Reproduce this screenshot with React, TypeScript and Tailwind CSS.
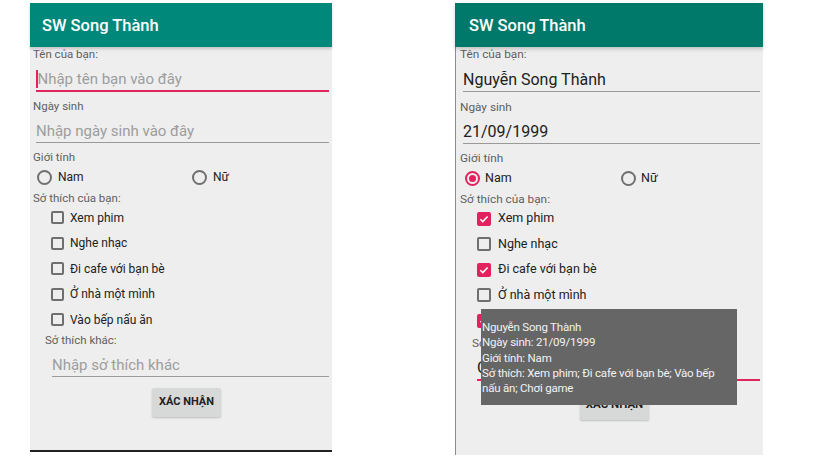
const font = "font-['Roboto',sans-serif]";

function Box({ checked, big }: { checked?: boolean; big?: boolean }) {
  const size = big ? 'w-[14px] h-[14px]' : 'w-[13px] h-[13px]';
  if (checked) {
    return (
      <div className={`${size} rounded-[2px] bg-[#e2225f] flex items-center justify-center shrink-0`}>
        <svg viewBox="0 0 14 14" className="w-[12px] h-[12px]">
          <path d="M2.8 7.2l2.8 2.8 5.6-6" fill="none" stroke="#fff" strokeWidth="1.8" />
        </svg>
      </div>
    );
  }
  return <div className={`${size} rounded-[2px] border-2 border-[#6f6f6f] shrink-0`} />;
}

function Radio({ checked }: { checked?: boolean }) {
  if (checked) {
    return (
      <div className="w-[15px] h-[15px] rounded-full border-2 border-[#e2225f] flex items-center justify-center shrink-0">
        <div className="w-[7px] h-[7px] rounded-full bg-[#e2225f]" />
      </div>
    );
  }
  return <div className="w-[15px] h-[15px] rounded-full border-2 border-[#707070] shrink-0" />;
}

const hobbies = ['Xem phim', 'Nghe nhạc', 'Đi cafe với bạn bè', 'Ở nhà một mình', 'Vào bếp nấu ăn'];

function LeftScreen() {
  return (
    <div className="ml-[30px] w-[302px] h-[449px] bg-[#eeeeee] border-b-2 border-[#222] flex flex-col">
      <div className="h-[44px] shrink-0 bg-[#00897b] shadow-[0_2px_3px_rgba(0,0,0,0.18)] flex items-center pt-[3px] pl-[12px] text-white text-[16.5px] font-medium">
        SW Song Thành
      </div>
      <div className="h-[15px] pl-[3px] text-[11.5px] leading-[15px] text-[#5f5f5f]">Tên của bạn:</div>
      <div className="h-[30px] ml-[6px] mr-[3px] flex items-end pb-[1px] border-b-2 border-[#e0245e]">
        <div className="w-[1.5px] h-[18px] bg-[#e0245e] mb-[1px]" />
        <span className="text-[15px] leading-[20px] text-[#9d9d9d]">Nhập tên bạn vào đây</span>
      </div>
      <div className="mt-[7px] h-[14px] pl-[3px] text-[11.5px] leading-[14px] text-[#5f5f5f]">Ngày sinh</div>
      <div className="h-[30px] ml-[6px] mr-[3px] flex items-end pb-[1px] border-b border-[#9a9a9a]">
        <span className="text-[15px] leading-[20px] text-[#9d9d9d]">Nhập ngày sinh vào đây</span>
      </div>
      <div className="mt-[7px] h-[14px] pl-[3px] text-[11.5px] leading-[14px] text-[#5f5f5f]">Giới tính</div>
      <div className="h-[26px] flex items-center text-[12px] text-[#212121]">
        <div className="ml-[7px] w-[155px] flex items-center gap-[6px]">
          <Radio />
          <span>Nam</span>
        </div>
        <div className="flex items-center gap-[6px]">
          <Radio />
          <span>Nữ</span>
        </div>
      </div>
      <div className="mt-[1px] h-[14px] pl-[3px] text-[11.5px] leading-[14px] text-[#5f5f5f]">Sở thích của bạn:</div>
      <div className="flex flex-col">
        {hobbies.map((h) => (
          <div key={h} className="h-[25.5px] pl-[21px] flex items-center gap-[6px] text-[12px] text-[#212121]">
            <Box />
            <span>{h}</span>
          </div>
        ))}
      </div>
      <div className="h-[14px] pl-[15px] text-[11.5px] leading-[14px] text-[#5f5f5f]">Sở thích khác:</div>
      <div className="h-[30px] ml-[22px] mr-[3px] flex items-end pb-[1px] border-b border-[#9a9a9a]">
        <span className="text-[15px] leading-[20px] text-[#9d9d9d]">Nhập sở thích khác</span>
      </div>
      <div className="mt-[11px] ml-[122px] w-[69px] h-[29px] rounded-[2px] bg-[#d7d8d8] shadow-[0_1px_2px_rgba(0,0,0,0.2)] flex items-center justify-center text-[11px] font-bold text-[#222]">
        XÁC NHẬN
      </div>
    </div>
  );
}

function RightScreen() {
  const checked = [true, false, true, false, true];
  return (
    <div className="ml-[123px] w-[308px] h-[452px] flex flex-col relative">
      <div className="h-[44px] shrink-0 bg-[#00796b] shadow-[0_2px_4px_rgba(0,0,0,0.2)] flex items-center pt-[3px] pl-[14px] text-white text-[16.5px] font-medium z-10">
        SW Song Thành
      </div>
      <div className="flex-1 bg-[#eeeeee] border-l border-[#8c8c8c] flex flex-col">
        <div className="h-[15px] pl-[4px] text-[11.8px] leading-[15px] text-[#5f5f5f]">Tên của bạn:</div>
        <div className="h-[30px] ml-[7px] mr-[3px] flex items-end pb-[1px] border-b border-[#9a9a9a]">
          <span className="text-[16px] leading-[20px] text-[#212121]">Nguyễn Song Thành</span>
        </div>
        <div className="mt-[8px] h-[14px] pl-[4px] text-[11.8px] leading-[14px] text-[#5f5f5f]">Ngày sinh</div>
        <div className="h-[30px] ml-[7px] mr-[3px] flex items-end pb-[1px] border-b border-[#9a9a9a]">
          <span className="text-[16px] leading-[20px] text-[#212121]">21/09/1999</span>
        </div>
        <div className="mt-[7px] h-[14px] pl-[4px] text-[11.8px] leading-[14px] text-[#5f5f5f]">Giới tính</div>
        <div className="h-[26px] flex items-center text-[12.5px] text-[#212121]">
          <div className="ml-[9px] w-[156px] flex items-center gap-[5px]">
            <Radio checked />
            <span>Nam</span>
          </div>
          <div className="flex items-center gap-[5px]">
            <Radio />
            <span>Nữ</span>
          </div>
        </div>
        <div className="mt-[1px] h-[14px] pl-[4px] text-[11.8px] leading-[14px] text-[#5f5f5f]">Sở thích của bạn:</div>
        <div className="flex flex-col">
          {hobbies.map((h, i) => (
            <div key={h} className="h-[25.5px] pl-[21px] flex items-center gap-[7px] text-[12.5px] text-[#212121]">
              <Box checked={checked[i]} big />
              <span>{h}</span>
            </div>
          ))}
        </div>
        <div className="mt-[2px] h-[14px] pl-[16px] text-[11.8px] leading-[14px] text-[#5f5f5f]">Sở thích khác:</div>
        <div className="h-[31px] ml-[21px] mr-[3px] flex items-end pb-[1px] border-b-2 border-[#e0245e]">
          <span className="text-[16px] leading-[20px] text-[#212121]">Chơi game</span>
        </div>
        <div className="mt-[10px] ml-[124px] w-[69px] h-[29px] rounded-[2px] bg-[#d7d8d8] shadow-[0_1px_2px_rgba(0,0,0,0.2)] flex items-center justify-center text-[11.5px] font-bold text-[#222]">
          XÁC NHẬN
        </div>
      </div>
      <div className="absolute left-[26px] top-[306px] w-[256px] h-[96px] bg-[#666666] pt-[11px] pl-[1px] text-[11.5px] leading-[15.3px] tracking-[-0.2px] whitespace-nowrap text-[#f2f2f2] z-20">
        <div>Nguyễn Song Thành</div>
        <div>Ngày sinh: 21/09/1999</div>
        <div>Giới tính: Nam</div>
        <div>Sở thích: Xem phim; Đi cafe với bạn bè; Vào bếp</div>
        <div>nấu ăn; Chơi game</div>
      </div>
    </div>
  );
}

export default function App() {
  return (
    <div className={`w-[819px] h-[460px] bg-white pt-[3px] flex overflow-hidden ${font}`}>
      <LeftScreen />
      <RightScreen />
    </div>
  );
}
